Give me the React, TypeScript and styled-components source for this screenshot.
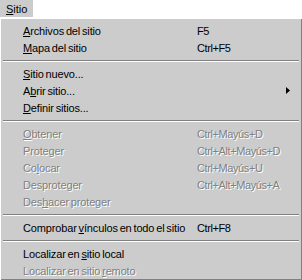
import React from 'react';
import styled, { createGlobalStyle } from 'styled-components';

const Global = createGlobalStyle`
  body {
    margin: 0;
    background: #fff;
    font-family: "Liberation Sans", Arial, sans-serif;
    font-size: 11px;
    color: #000;
  }
`;

const MenuBar = styled.div`
  display: flex;
  height: 17px;
  background: #fff;
`;

const MenuTitle = styled.div`
  display: flex;
  align-items: center;
  padding: 0 6px;
  background: #cccccc;
`;

const Menu = styled.div`
  box-sizing: border-box;
  width: 301px;
  margin: 2px 0 0 1px;
  padding: 3px 2px 0 2px;
  background: #cccccc;
  border-right: 1px solid #808080;
  border-bottom: 1px solid #808080;
`;

const Item = styled.div<{ $disabled?: boolean }>`
  display: flex;
  align-items: center;
  height: 17px;
  padding: 0 6px 0 20px;
  white-space: nowrap;
  color: ${(p) => (p.$disabled ? '#808080' : '#000')};
  text-shadow: ${(p) => (p.$disabled ? '1px 1px 0 #ffffff' : 'none')};
`;

const Label = styled.span`
  width: 174px;
  flex-shrink: 0;
  letter-spacing: -0.15px;
  word-spacing: -1px;
`;

const Shortcut = styled.span`
  flex: 1;
  letter-spacing: -0.4px;
`;

const Arrow = styled.svg`
  margin-left: auto;
  margin-right: 3px;
`;

const Separator = styled.div`
  height: 9px;
  display: flex;
  flex-direction: column;
  justify-content: center;
  &::before {
    content: '';
    border-top: 1px solid #808080;
    border-bottom: 1px solid #ffffff;
  }
`;

const U = styled.span`
  text-decoration: underline;
`;

type Entry = {
  pre?: string;
  key?: string;
  post?: string;
  shortcut?: string;
  disabled?: boolean;
  submenu?: boolean;
} | 'sep';

const entries: Entry[] = [
  { key: 'A', post: 'rchivos del sitio', shortcut: 'F5' },
  { key: 'M', post: 'apa del sitio', shortcut: 'Ctrl+F5' },
  'sep',
  { key: 'S', post: 'itio nuevo...' },
  { pre: 'A', key: 'b', post: 'rir sitio...', submenu: true },
  { key: 'D', post: 'efinir sitios...' },
  'sep',
  { key: 'O', post: 'btener', shortcut: 'Ctrl+Mayús+D', disabled: true },
  { pre: 'Proteger', shortcut: 'Ctrl+Alt+Mayús+D', disabled: true },
  { pre: 'Co', key: 'l', post: 'ocar', shortcut: 'Ctrl+Mayús+U', disabled: true },
  { pre: 'Desproteger', shortcut: 'Ctrl+Alt+Mayús+A', disabled: true },
  { pre: 'Des', key: 'h', post: 'acer proteger', disabled: true },
  'sep',
  { pre: 'Comprobar ', key: 'v', post: 'ínculos en todo el sitio', shortcut: 'Ctrl+F8' },
  'sep',
  { pre: 'Localizar en ', key: 's', post: 'itio local' },
  { pre: 'Localizar en sitio ', key: 'r', post: 'emoto', disabled: true },
];

export default function App() {
  return (
    <>
      <Global />
      <MenuBar>
        <MenuTitle>
          <span>
            <U>S</U>itio
          </span>
        </MenuTitle>
      </MenuBar>
      <Menu>
        {entries.map((e, i) =>
          e === 'sep' ? (
            <Separator key={i} />
          ) : (
            <Item key={i} $disabled={e.disabled}>
              <Label>
                {e.pre}
                {e.key && <U>{e.key}</U>}
                {e.post}
              </Label>
              {e.shortcut && <Shortcut>{e.shortcut}</Shortcut>}
              {e.submenu && (
                <Arrow width="4" height="7" viewBox="0 0 4 7">
                  <path d="M0 0 L4 3.5 L0 7 Z" fill="#000" />
                </Arrow>
              )}
            </Item>
          )
        )}
      </Menu>
    </>
  );
}
